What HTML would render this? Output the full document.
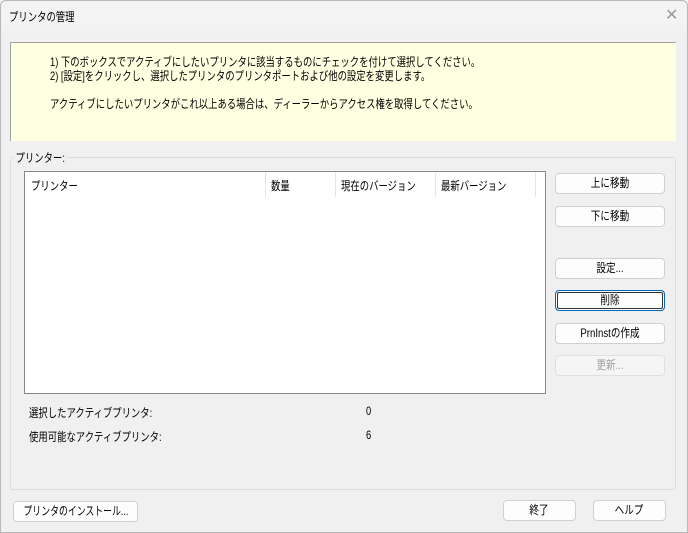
<!DOCTYPE html><html><head><meta charset="utf-8"><style>
*{box-sizing:border-box}
body{margin:0;width:688px;height:533px;background:#f0f0f0;font-family:"Liberation Sans","Noto Sans CJK JP",sans-serif;font-size:12px;color:#000;position:relative;overflow:hidden}
.win{position:absolute;left:0;top:0;width:688px;height:533px;border:1px solid #b8b8b8;border-radius:6px 6px 0 0}
.title{position:absolute;left:1px;top:1px;width:686px;height:30px;background:#f3f3f3;border-radius:6px 6px 0 0}
.a{position:absolute;white-space:nowrap;transform:scaleX(.78);transform-origin:0 0}
.b{position:absolute}
.btn{position:absolute;background:#fdfdfd;border:1px solid #d0d0d0;border-radius:4px;text-align:center;line-height:18px;height:21px;white-space:nowrap}
.btn span{display:inline-block;transform:scaleX(.8)}
</style></head><body><div class="win"></div>
<div class="title"></div>
<div class="a" style="left:9px;top:8px">プリンタの管理</div>
<div class="b" style="left:665px;top:5px;font-size:16px;color:#999">✕</div>
<div class="b" style="left:10px;top:42px;width:666px;height:99px;background:#ffffe1;border:1px solid #a0a0a0;border-bottom:none;border-right:none"></div>
<div class="a" style="left:50px;top:55px;line-height:14px">1) 下のボックスでアクティブにしたいプリンタに該当するものにチェックを付けて選択してください。<br>2) [設定]をクリックし、選択したプリンタのプリンタポートおよび他の設定を変更します。<br><br>アクティブにしたいプリンタがこれ以上ある場合は、ディーラーからアクセス権を取得してください。</div>
<div class="b" style="left:10px;top:157px;width:666px;height:333px;border:1px solid #dcdcdc;border-radius:3px"></div>
<div class="a" style="left:14px;top:149px;background:#f0f0f0;padding:0 2px">プリンター:</div>
<div class="b" style="left:24px;top:171px;width:522px;height:223px;background:#fff;border:1px solid #828790"></div>
<div class="a" style="left:31px;top:177px">プリンター</div>
<div class="b" style="left:265px;top:172px;width:1px;height:25px;background:#e5e5e5"></div>
<div class="a" style="left:271px;top:177px">数量</div>
<div class="b" style="left:335px;top:172px;width:1px;height:25px;background:#e5e5e5"></div>
<div class="a" style="left:341px;top:177px">現在のバージョン</div>
<div class="b" style="left:435px;top:172px;width:1px;height:25px;background:#e5e5e5"></div>
<div class="a" style="left:441px;top:177px">最新バージョン</div>
<div class="b" style="left:535px;top:172px;width:1px;height:25px;background:#e5e5e5"></div>
<div class="btn" style="left:555px;top:173px;width:110px"><span>上に移動</span></div>
<div class="btn" style="left:555px;top:206px;width:110px"><span>下に移動</span></div>
<div class="btn" style="left:555px;top:258px;width:110px"><span>設定...</span></div>
<div class="btn" style="left:555px;top:290px;width:110px;border:1px solid #0067c0;box-shadow:inset 0 0 0 1px #fff,inset 0 0 0 2px #333"><span>削除</span></div>
<div class="btn" style="left:555px;top:323px;width:110px"><span>PrnInstの作成</span></div>
<div class="btn" style="left:555px;top:355px;width:110px;background:#f5f5f5;border-color:#e0e0e0;color:#a0a0a0"><span>更新...</span></div>
<div class="a" style="left:29px;top:404px">選択したアクティブプリンタ:</div>
<div class="a" style="left:366px;top:404px">0</div>
<div class="a" style="left:29px;top:428px">使用可能なアクティブプリンタ:</div>
<div class="a" style="left:366px;top:428px">6</div>
<div class="btn" style="left:13px;top:501px;width:125px;overflow:hidden"><span style="transform:scaleX(.74);margin-left:-20px;margin-right:-20px">プリンタのインストール...</span></div>
<div class="btn" style="left:503px;top:500px;width:73px"><span>終了</span></div>
<div class="btn" style="left:593px;top:500px;width:73px"><span>ヘルプ</span></div>
</body></html>
